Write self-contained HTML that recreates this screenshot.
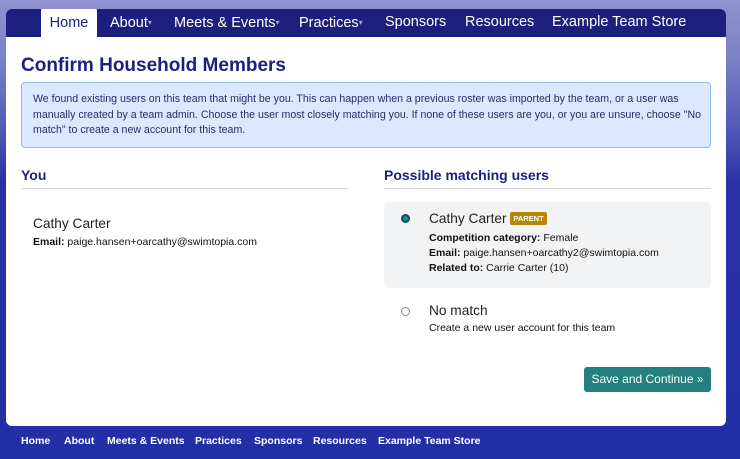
<!DOCTYPE html>
<html><head><style>
*{box-sizing:border-box;margin:0;padding:0}
body{width:740px;height:459px;overflow:hidden;font-family:"Liberation Sans",sans-serif;background:linear-gradient(180deg,#8f93d0 0px,#7b80c8 60px,#4a52b4 140px,#2a32a6 180px,#232ea6 459px);position:relative}
.card{position:absolute;left:6px;top:9px;width:720px;height:417px;background:#fff;border-radius:6px;overflow:hidden}
.nav{height:28px;background:#1c1f7e;position:relative}
.nav a{position:absolute;top:1px;color:#fff;font-size:14.5px;line-height:25px;text-decoration:none;white-space:nowrap}
.nav .home{position:absolute;left:35px;top:-3px;width:56px;height:31px;background:#fff;color:#1c1f7e;border-radius:5px 5px 0 0;text-align:center;line-height:34px;font-size:14.5px}
.car{font-size:8px;vertical-align:2px;color:#aab}
h1{position:absolute;left:15px;top:46px;font-size:19px;color:#1c1f7e;font-weight:bold}
.alert{position:absolute;left:15px;top:73px;width:690px;height:66px;background:#dbe8fd;border:1px solid #8fbcf0;border-radius:4px;padding:9px 11px;font-size:10.6px;line-height:15.5px;color:#23306b;white-space:nowrap}
h2{position:absolute;font-size:14px;font-weight:bold;color:#1c1f7e}
.hr{position:absolute;height:1px;background:#d4d4d8}
.t{position:absolute;font-size:10.5px;color:#111;white-space:nowrap;line-height:15px}
.nm{position:absolute;font-size:13.7px;color:#222;white-space:nowrap}
.sel{position:absolute;left:378px;top:193px;width:327px;height:86px;background:#f2f3f5;border-radius:4px}
.badge{display:inline-block;background:#bb8405;color:#fff;font-size:7.5px;font-weight:bold;padding:2px 3px;border-radius:2px;vertical-align:2px}
.btn{position:absolute;left:578px;top:358px;width:127px;height:25px;background:#23807f;border-radius:3px;color:#fff;font-size:12px;line-height:25px;text-align:center}
.foot a{position:absolute;top:435px;color:#fff;font-size:10.5px;font-weight:bold;white-space:nowrap}
</style></head><body>
<div class="card">
 <div class="nav">
  <div class="home">Home</div>
  <a style="left:104px">About<span class="car">▾</span></a>
  <a style="left:168px">Meets &amp; Events<span class="car">▾</span></a>
  <a style="left:293px">Practices<span class="car">▾</span></a>
  <a style="left:379px">Sponsors</a>
  <a style="left:459px">Resources</a>
  <a style="left:546px">Example Team Store</a>
 </div>
 <h1>Confirm Household Members</h1>
 <div class="alert">We found existing users on this team that might be you. This can happen when a previous roster was imported by the team, or a user was<br>manually created by a team admin. Choose the user most closely matching you. If none of these users are you, or you are unsure, choose "No<br>match" to create a new account for this team.</div>
 <h2 style="left:15px;top:158px">You</h2>
 <div class="hr" style="left:15px;top:179px;width:327px"></div>
 <div class="nm" style="left:27px;top:207px">Cathy Carter</div>
 <div class="t" style="left:27px;top:226px"><b>Email:</b> paige.hansen+oarcathy@swimtopia.com</div>
 <h2 style="left:378px;top:158px">Possible matching users</h2>
 <div class="hr" style="left:378px;top:179px;width:327px"></div>
 <div class="sel"></div>
 <div style="position:absolute;left:395px;top:205px;width:9px;height:9px;border-radius:50%;background:#1a8f96;border:2px solid #0d4f57"></div>
 <div class="nm" style="left:423px;top:202px">Cathy Carter <span class="badge">PARENT</span></div>
 <div class="t" style="left:423px;top:222px"><b>Competition category:</b> Female</div>
 <div class="t" style="left:423px;top:237px"><b>Email:</b> paige.hansen+oarcathy2@swimtopia.com</div>
 <div class="t" style="left:423px;top:252px"><b>Related to:</b> Carrie Carter (10)</div>
 <div style="position:absolute;left:395px;top:298px;width:9px;height:9px;border-radius:50%;border:1px solid #888;background:#fff"></div>
 <div class="nm" style="left:423px;top:294px">No match</div>
 <div class="t" style="left:423px;top:312px">Create a new user account for this team</div>
 <div class="btn">Save and Continue »</div>
</div>
<div class="foot">
 <a style="left:21px">Home</a><a style="left:64px">About</a><a style="left:107px">Meets &amp; Events</a><a style="left:195px">Practices</a><a style="left:254px">Sponsors</a><a style="left:313px">Resources</a><a style="left:378px">Example Team Store</a>
</div>
</body></html>
